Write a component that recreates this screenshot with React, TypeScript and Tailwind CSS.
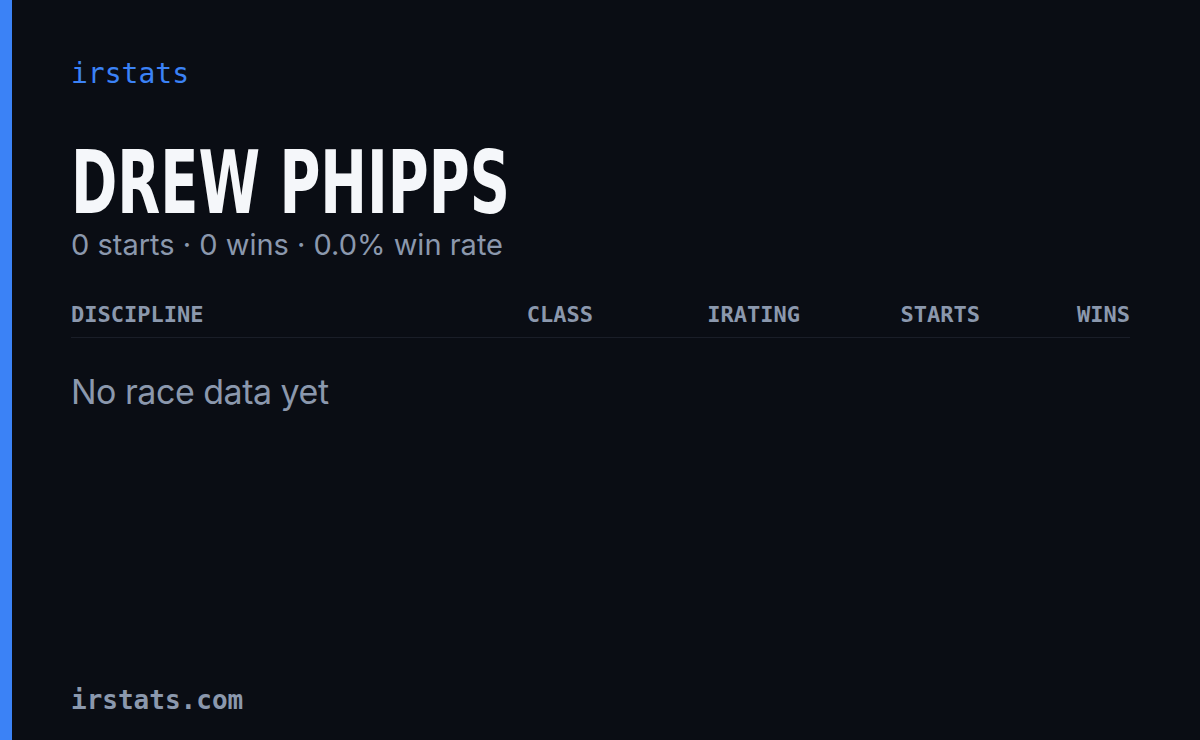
import React from "react";

export default function App() {
  const cols = ["CLASS", "IRATING", "STARTS", "WINS"];
  return (
    <div className="flex h-[740px] w-[1200px] overflow-hidden bg-[#0a0d14]">
      <div className="w-[12px] shrink-0 bg-[#3b82f6]" />
      <div className="flex flex-1 flex-col pl-[59px] pr-[70px]">
        <div className="mt-[54px] text-[28px] leading-[40px] text-[#3b82f6] [font-family:'DejaVu_Sans_Mono',monospace]">
          irstats
        </div>
        <div className="mt-[49px] h-[80px] origin-left scale-x-[0.705] whitespace-nowrap text-[88px] font-bold leading-[80px] text-[#f5f7fa] [font-family:'DejaVu_Sans_Condensed','DejaVu_Sans',sans-serif] [font-stretch:condensed]">
          DREW PHIPPS
        </div>
        <div className="mt-[4px] text-[29px] leading-[36px] text-[#8b98ad] [font-family:Inter,sans-serif]">
          0 starts · 0 wins · 0.0% win rate
        </div>
        <div className="mt-[38px] grid grid-cols-[1fr_140px_207px_180px_150px] border-b border-[#1a1e28] pb-[8px] text-[22px] font-bold leading-[28px] text-[#8b98ad] [font-family:'DejaVu_Sans_Mono',monospace]">
          <div>DISCIPLINE</div>
          {cols.map((c) => (
            <div key={c} className="text-right">
              {c}
            </div>
          ))}
        </div>
        <div className="mt-[32px] text-[34px] leading-[44px] text-[#8b98ad] [font-family:Inter,sans-serif] tracking-[-0.5px]">
          No race data yet
        </div>
        <div className="mt-auto mb-[22px] text-[26px] font-bold leading-[36px] text-[#8b98ad] [font-family:'DejaVu_Sans_Mono',monospace]">
          irstats.com
        </div>
      </div>
    </div>
  );
}
